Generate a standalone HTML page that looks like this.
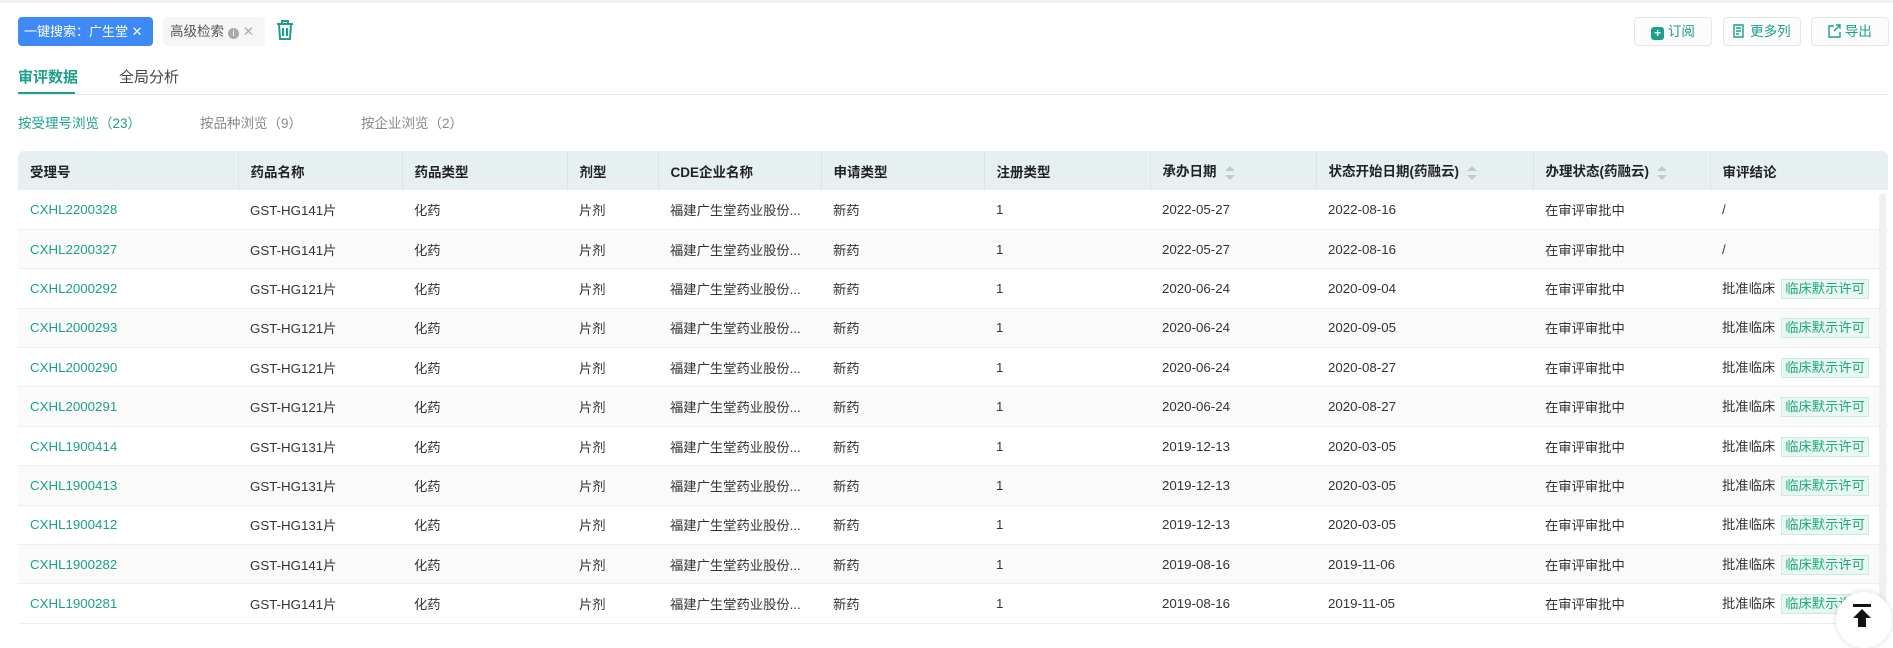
<!DOCTYPE html>
<html><head><meta charset="utf-8"><style>
*{margin:0;padding:0;box-sizing:border-box}
body{width:1893px;height:627px;overflow:hidden;background:#fff;font-family:"Liberation Sans","Noto Sans CJK SC",sans-serif;font-size:14px;color:#333;position:relative}
.topline{position:absolute;left:0;top:0;width:1893px;height:3px;background:#eef1f6}
.tag1{position:absolute;left:18px;top:17px;width:135px;height:29px;background:#3d8af7;color:#fff;border-radius:4px;line-height:29px;padding-left:6px;font-size:13px;white-space:nowrap}
.tag2{position:absolute;left:163px;top:17px;width:102px;height:29px;background:#f6f6f6;color:#555;border-radius:4px;line-height:29px;padding-left:7px;font-size:13.5px;white-space:nowrap}
.info{display:inline-block;width:11px;height:11px;border-radius:50%;background:#aaa;color:#fff;font-size:9px;line-height:11px;text-align:center;vertical-align:0;margin-left:4px}
.btn{position:absolute;top:17px;height:29px;border:1px solid #e3e6ea;border-radius:4px;background:#fcfcfc;color:#1aa08c;line-height:27px;text-align:center;font-size:13.5px}
.tab{position:absolute;top:66px;font-size:15px}
.sub{position:absolute;top:112px;font-size:13.5px;color:#888}
table{position:absolute;left:18px;top:151px;width:1870px;border-collapse:collapse;table-layout:fixed}
th{height:39px;background:#e7f0f1;text-align:left;font-weight:bold;padding-left:12px;border-left:1px solid #d9e6e6;font-size:13.5px;color:#222}
th:first-child{border-left:none;border-radius:6px 0 0 0}
th:last-child{border-radius:0 6px 0 0}
td{height:39.4px;padding-left:12px;border-bottom:1px solid #ebeef5;white-space:nowrap;overflow:hidden;font-size:13.3px;color:#333}
tr:nth-child(odd) td{background:#fafafa}
td.id{color:#1aa08c}
.s{display:inline-block;vertical-align:middle;margin-left:8px;width:10px;height:16px;position:relative}
.s:before{content:"";position:absolute;left:0;top:1px;border:5px solid transparent;border-bottom:5px solid #c5c9cc;border-top:none}
.s:after{content:"";position:absolute;left:0;top:10px;border:5px solid transparent;border-top:5px solid #c5c9cc;border-bottom:none}
.ok{display:inline-block;margin-left:6px;background:#e8f7f1;border:1px solid #c9ecdd;color:#1ea87b;padding:0 3px;line-height:18px;font-size:13.3px}
</style></head><body>
<div class="topline"></div>
<div class="tag1">一键搜索：广生堂 ✕</div>
<div class="tag2">高级检索<span class="info">i</span> <span style="color:#aaa">✕</span></div>
<svg style="position:absolute;left:276px;top:19px" width="18" height="22" viewBox="0 0 18 22" fill="none" stroke="#1aa08c" stroke-width="2"><path d="M1 5h16M6 5V2h6v3M3 5l1 15h10l1-15M7 9v8M11 9v8"/></svg>
<div class="btn" style="left:1634px;width:78px"><span style="display:inline-block;width:13px;height:13px;background:#1aa08c;border-radius:3px;color:#fff;font-size:12px;line-height:13px;vertical-align:-1px;font-weight:bold">+</span> 订阅</div>
<div class="btn" style="left:1723px;width:78px"><svg width="13" height="14" viewBox="0 0 13 14" style="vertical-align:-2px" fill="none" stroke="#1aa08c" stroke-width="1.4"><path d="M1 1h9v12H1zM3 4h5M3 7h5M3 10h3"/></svg> 更多列</div>
<div class="btn" style="left:1811px;width:78px"><svg width="13" height="14" viewBox="0 0 13 14" style="vertical-align:-2px" fill="none" stroke="#1aa08c" stroke-width="1.4"><path d="M6 2H1v11h11V8M8 1h4v4M12 1L6 7"/></svg> 导出</div>
<div class="tab" style="left:18px;color:#1aa08c;font-weight:bold">审评数据</div>
<div style="position:absolute;left:18px;top:92px;width:57px;height:3px;background:#1aa08c"></div>
<div class="tab" style="left:119px;color:#444">全局分析</div>
<div style="position:absolute;left:18px;top:94px;width:1870px;height:1px;background:#e6e8eb"></div>
<div class="sub" style="left:18px;color:#1aa08c">按受理号浏览（23）</div>
<div class="sub" style="left:200px">按品种浏览（9）</div>
<div class="sub" style="left:361px">按企业浏览（2）</div>
<table>
<colgroup><col style="width:220px"><col style="width:164px"><col style="width:165px"><col style="width:91px"><col style="width:163px"><col style="width:163px"><col style="width:166px"><col style="width:166px"><col style="width:217px"><col style="width:177px"><col style="width:178px"></colgroup>
<tr><th>受理号</th><th>药品名称</th><th>药品类型</th><th>剂型</th><th>CDE企业名称</th><th>申请类型</th><th>注册类型</th><th>承办日期<span class="s"></span></th><th>状态开始日期(药融云)<span class="s"></span></th><th>办理状态(药融云)<span class="s"></span></th><th>审评结论</th></tr>
<tr><td class="id">CXHL2200328</td><td>GST-HG141片</td><td>化药</td><td>片剂</td><td>福建广生堂药业股份...</td><td>新药</td><td>1</td><td>2022-05-27</td><td>2022-08-16</td><td>在审评审批中</td><td>/</td></tr>
<tr><td class="id">CXHL2200327</td><td>GST-HG141片</td><td>化药</td><td>片剂</td><td>福建广生堂药业股份...</td><td>新药</td><td>1</td><td>2022-05-27</td><td>2022-08-16</td><td>在审评审批中</td><td>/</td></tr>
<tr><td class="id">CXHL2000292</td><td>GST-HG121片</td><td>化药</td><td>片剂</td><td>福建广生堂药业股份...</td><td>新药</td><td>1</td><td>2020-06-24</td><td>2020-09-04</td><td>在审评审批中</td><td>批准临床<span class="ok">临床默示许可</span></td></tr>
<tr><td class="id">CXHL2000293</td><td>GST-HG121片</td><td>化药</td><td>片剂</td><td>福建广生堂药业股份...</td><td>新药</td><td>1</td><td>2020-06-24</td><td>2020-09-05</td><td>在审评审批中</td><td>批准临床<span class="ok">临床默示许可</span></td></tr>
<tr><td class="id">CXHL2000290</td><td>GST-HG121片</td><td>化药</td><td>片剂</td><td>福建广生堂药业股份...</td><td>新药</td><td>1</td><td>2020-06-24</td><td>2020-08-27</td><td>在审评审批中</td><td>批准临床<span class="ok">临床默示许可</span></td></tr>
<tr><td class="id">CXHL2000291</td><td>GST-HG121片</td><td>化药</td><td>片剂</td><td>福建广生堂药业股份...</td><td>新药</td><td>1</td><td>2020-06-24</td><td>2020-08-27</td><td>在审评审批中</td><td>批准临床<span class="ok">临床默示许可</span></td></tr>
<tr><td class="id">CXHL1900414</td><td>GST-HG131片</td><td>化药</td><td>片剂</td><td>福建广生堂药业股份...</td><td>新药</td><td>1</td><td>2019-12-13</td><td>2020-03-05</td><td>在审评审批中</td><td>批准临床<span class="ok">临床默示许可</span></td></tr>
<tr><td class="id">CXHL1900413</td><td>GST-HG131片</td><td>化药</td><td>片剂</td><td>福建广生堂药业股份...</td><td>新药</td><td>1</td><td>2019-12-13</td><td>2020-03-05</td><td>在审评审批中</td><td>批准临床<span class="ok">临床默示许可</span></td></tr>
<tr><td class="id">CXHL1900412</td><td>GST-HG131片</td><td>化药</td><td>片剂</td><td>福建广生堂药业股份...</td><td>新药</td><td>1</td><td>2019-12-13</td><td>2020-03-05</td><td>在审评审批中</td><td>批准临床<span class="ok">临床默示许可</span></td></tr>
<tr><td class="id">CXHL1900282</td><td>GST-HG141片</td><td>化药</td><td>片剂</td><td>福建广生堂药业股份...</td><td>新药</td><td>1</td><td>2019-08-16</td><td>2019-11-06</td><td>在审评审批中</td><td>批准临床<span class="ok">临床默示许可</span></td></tr>
<tr><td class="id">CXHL1900281</td><td>GST-HG141片</td><td>化药</td><td>片剂</td><td>福建广生堂药业股份...</td><td>新药</td><td>1</td><td>2019-08-16</td><td>2019-11-05</td><td>在审评审批中</td><td>批准临床<span class="ok">临床默示许可</span></td></tr>
</table>
<div style="position:absolute;left:1879px;top:193px;width:7px;height:434px;background:#eef0f2;border-radius:3px"></div>
<div style="position:absolute;left:1836px;top:592px;width:56px;height:56px;border-radius:50%;background:#fff;box-shadow:0 0 6px rgba(0,0,0,.15)"></div>
<svg style="position:absolute;left:1852px;top:604px" width="20" height="23" viewBox="0 0 20 23"><rect x="1" y="0" width="18" height="3" fill="#111"/><path d="M10 5L1 14h5v9h8v-9h5z" fill="#111"/></svg>
</body></html>
